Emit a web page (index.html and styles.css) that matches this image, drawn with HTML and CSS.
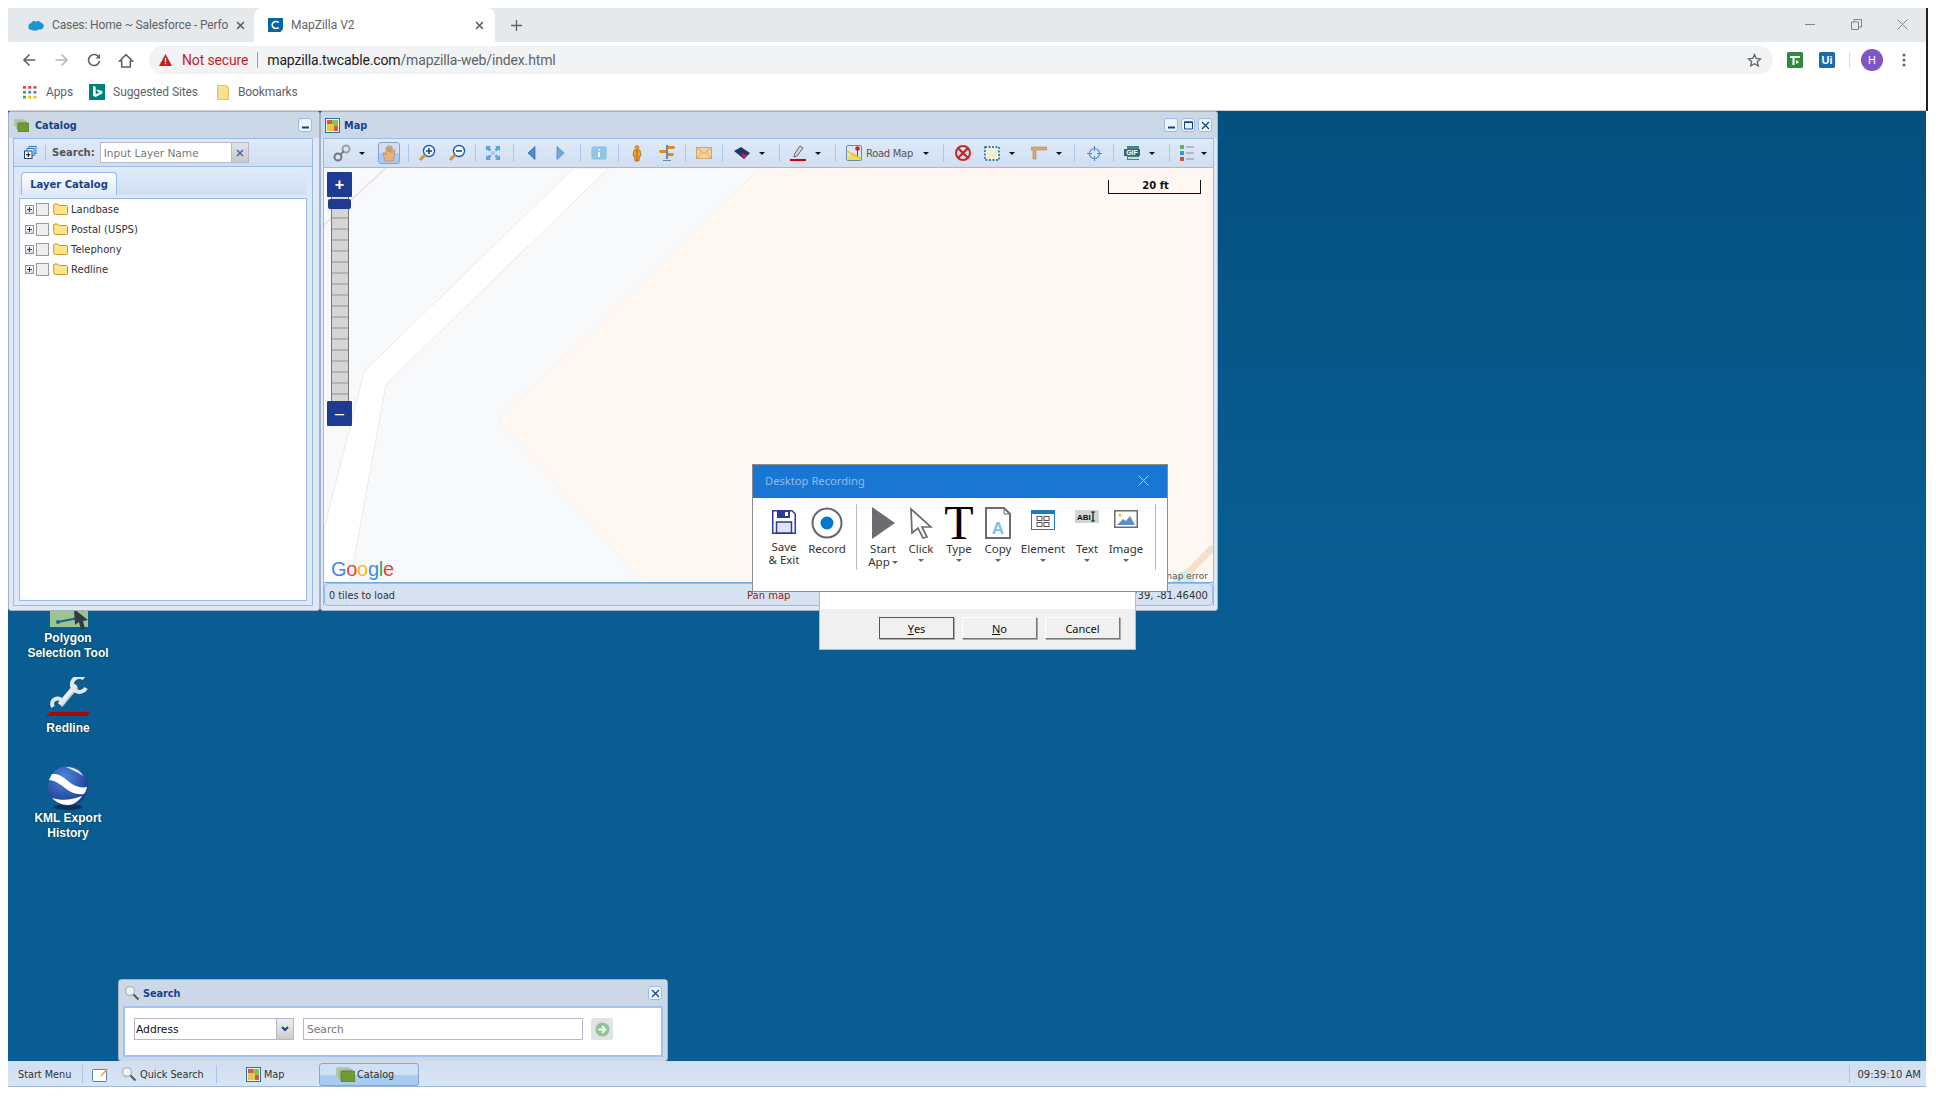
FILE: index.html
```html
<!DOCTYPE html>
<html lang="en">
<head>
<meta charset="utf-8">
<title>MapZilla V2</title>
<link rel="stylesheet" href="styles.css">
</head>
<body>
<div class="browser">
  <div class="tabstrip">
    <div class="tab">
      <svg class="fav" width="16" height="11" viewBox="0 0 13 10" preserveAspectRatio="none"><path d="M3 9C1 9 0 7.500 .5 6 0 4.500 1 3 2.500 3 3 1 5 .5 6.500 1.500 8 .5 10 1 10.500 2.500 12.500 3 13.500 5 12.500 6.500 12 8.500 10 9 9 8.500 7.500 10 5 10 3 9Z" fill="#1b96d6"/></svg>
      <span class="tab-title">Cases: Home ~ Salesforce - Perfo</span>
      <svg class="tab-x" width="9" height="9" viewBox="0 0 8 8"><path d="M1 1l6 6M7 1L1 7" stroke="#5f6368" stroke-width="1.300"/></svg>
    </div>
    <div class="tab tab-on">
      <svg class="fav" width="15" height="14" viewBox="0 0 12 14" preserveAspectRatio="none"><path d="M0 0h12v11l-2 3H0Z" fill="#07689f"/><path d="M8.500 4.500A3 3.500 0 1 0 8.500 9.500" fill="none" stroke="#fff" stroke-width="1.400"/></svg>
      <span class="tab-title">MapZilla V2</span>
      <svg class="tab-x" width="9" height="9" viewBox="0 0 8 8"><path d="M1 1l6 6M7 1L1 7" stroke="#5f6368" stroke-width="1.300"/></svg>
    </div>
    <svg class="newtab" width="11" height="11" viewBox="0 0 10 10"><path d="M5 0v10M0 5h10" stroke="#5f6368" stroke-width="1.200"/></svg>
    <div class="winctl">
      <svg width="11" height="11" viewBox="0 0 11 11"><path d="M0 5.500h10" stroke="#80868b"/></svg>
      <svg width="11" height="11" viewBox="0 0 11 11"><path d="M.5 3h7v7.500h-7zM3 3V.5h7.500V8H8" fill="none" stroke="#80868b"/></svg>
      <svg width="11" height="11" viewBox="0 0 11 11"><path d="M.5 .5l10 10M10.500 .5l-10 10" stroke="#80868b"/></svg>
    </div>
  </div>
  <div class="navbar">
    <svg class="nav nav-back" width="15" height="14" viewBox="0 0 14 14"><path d="M13 7H2M7 1.500L1.500 7 7 12.500" fill="none" stroke="#5f6368" stroke-width="1.600"/></svg>
    <svg class="nav nav-fwd" width="15" height="14" viewBox="0 0 14 14"><path d="M1 7h11M7 1.500L12.500 7 7 12.500" fill="none" stroke="#b4b7bb" stroke-width="1.600"/></svg>
    <svg class="nav nav-rel" width="14" height="14" viewBox="0 0 14 14"><path d="M12 4.500A5.500 5.500 0 1 0 12.500 8" fill="none" stroke="#5f6368" stroke-width="1.600"/><path d="M13 1v4.500H8.500Z" fill="#5f6368"/></svg>
    <svg class="nav nav-home" width="16" height="15" viewBox="0 0 14 14"><path d="M1 7.500L7 1.500l6 6H11v5.500H3V7.500Z" fill="none" stroke="#5f6368" stroke-width="1.500"/></svg>
    <div class="omnibox">
      <svg width="15" height="12" viewBox="0 0 12 11"><path d="M6 0l6 11H0Z" fill="#c5221f"/><path d="M6 3.500v4M6 8.300v1.200" stroke="#fff" stroke-width="1.200"/></svg>
      <span class="insecure">Not secure</span>
      <span class="omni-sep"></span>
      <span class="url"><b>mapzilla.twcable.com</b>/mapzilla-web/index.html</span>
      <svg class="star" width="15" height="15" viewBox="0 0 15 15"><path d="M7.500 1.500l1.800 4 4.300.4-3.300 2.900 1 4.200-3.800-2.200-3.800 2.200 1-4.200L1.400 5.900l4.300-.4Z" fill="none" stroke="#5f6368" stroke-width="1.300"/></svg>
    </div>
    <svg class="ext ext-first" width="16" height="16" viewBox="0 0 16 16"><rect width="16" height="16" rx="1.500" fill="#2e8b3c"/><path d="M3 4h10v2H7.500v7H5.500V6H3Z" fill="#fff"/><path d="M9 8v4l3-2Z" fill="#fff"/></svg>
    <svg class="ext" width="16" height="16" viewBox="0 0 16 16"><rect width="16" height="16" rx="1.500" fill="#1f68ad"/><text x="8" y="12" class="ui-text">Ui</text></svg>
    <span class="nav-sep"></span>
    <span class="avatar">H</span>
    <svg class="kebab" width="4" height="14" viewBox="0 0 4 14"><circle cx="2" cy="2" r="1.500" fill="#5f6368"/><circle cx="2" cy="7" r="1.500" fill="#5f6368"/><circle cx="2" cy="12" r="1.500" fill="#5f6368"/></svg>
  </div>
  <div class="bookmarks">
    <span class="bm bm-apps">
      <svg width="14" height="13" viewBox="0 0 12 12" preserveAspectRatio="none"><g><rect width="2.500" height="2.500" fill="#ea4335"/><rect x="4.500" width="2.500" height="2.500" fill="#ea4335"/><rect x="9" width="2.500" height="2.500" fill="#ea4335"/><rect y="4.500" width="2.500" height="2.500" fill="#34a853"/><rect x="4.500" y="4.500" width="2.500" height="2.500" fill="#4285f4"/><rect x="9" y="4.500" width="2.500" height="2.500" fill="#4285f4"/><rect y="9" width="2.500" height="2.500" fill="#34a853"/><rect x="4.500" y="9" width="2.500" height="2.500" fill="#fbbc05"/><rect x="9" y="9" width="2.500" height="2.500" fill="#fbbc05"/></g></svg>
      Apps
    </span>
    <span class="bm bm-bing">
      <svg width="16" height="16" viewBox="0 0 12 16" preserveAspectRatio="none"><rect width="12" height="16" fill="#00827a"/><path d="M3 2l2 .7v7.500l3-1.700-1.500-.7-1-2.300 4.500 1.600v2.500L5 13l-2-1.300Z" fill="#fff"/></svg>
      Suggested Sites
    </span>
    <span class="bm bm-folder">
      <svg width="12" height="15" viewBox="0 0 10 14" preserveAspectRatio="none"><path d="M.5 .5h7l2 2v11h-9Z" fill="#fbe08f" stroke="#e3c35c"/></svg>
      Bookmarks
    </span>
  </div>
</div>

<div class="desktop">
  <div class="canvas">
    <div class="dicon dicon-poly">
      <svg width="48" height="40" viewBox="0 0 48 40"><rect x="6" y="6" width="38" height="30" fill="#9cc48f"/><path d="M14 31l20-4" stroke="#1d5f9c" stroke-width="2"/><circle cx="14" cy="31" r="2" fill="#1d5f9c"/><path d="M30 18l14 11-5 1 2 8-4 1-2-8-4 3Z" fill="#333b42"/></svg>
      <span>Polygon<br>Selection Tool</span>
    </div>
    <div class="dicon dicon-red">
      <svg width="48" height="44" viewBox="0 0 48 44">
        <path d="M16 28L32 9" stroke="#c9ced1" stroke-width="6"/>
        <path d="M16 27L32 8" stroke="#eef0f1" stroke-width="3.500"/>
        <path d="M40 1.500A7.500 7.500 0 1 0 42 11" fill="none" stroke="#e3e6e8" stroke-width="4"/>
        <path d="M12 32A5.500 5.500 0 1 1 22 28" fill="none" stroke="#e3e6e8" stroke-width="4" transform="translate(-3 -2)"/>
        <path d="M6 35H46L43 39H2Z" fill="#a30a0a"/>
      </svg>
      <span>Redline</span>
    </div>
    <div class="dicon dicon-kml">
      <svg width="48" height="45" viewBox="0 0 48 45"><defs><radialGradient id="globe" cx=".4" cy=".3" r=".8"><stop offset="0" stop-color="#4f86e0"/><stop offset="1" stop-color="#13307f"/></radialGradient></defs><ellipse cx="24" cy="41" rx="14" ry="3" fill="#03304f"/><circle cx="24" cy="20" r="20" fill="url(#globe)"/><path d="M8 8c9-1 14 6 20 10 5 3 10 4 15 3-1 4-2 6-3 7-8 1-14-2-19-6C16 18 10 14 5 14Z" fill="#fff"/><path d="M22 1c6 0 14 2 17 9-6-4-11-6-17-9Z" fill="#d7e3f6"/><path d="M8 32c10 3 20 2 30-2-2 4-8 9-14 9-7 0-12-3-16-7Z" fill="#fff"/></svg>
      <span>KML Export<br>History</span>
    </div>

    <section class="win win-cat">
      <header class="wtitle">
        <svg width="15" height="13" viewBox="0 0 15 13"><rect x="0" y="0" width="11" height="8" fill="#b8c6b0"/><rect x="2" y="2" width="11" height="8" fill="#a4bd93"/><rect x="4" y="4" width="11" height="9" rx="1" fill="#6f9b32" stroke="#4c7420" stroke-width=".6"/></svg>
        <span class="wname">Catalog</span>
        <span class="wbtn wbtn-solo"><svg width="9" height="9" viewBox="0 0 9 9"><path d="M1 6.500h7" stroke="#15428b" stroke-width="2"/></svg></span>
      </header>
      <div class="wbody">
        <div class="cat-tools">
          <svg width="13" height="13" viewBox="0 0 13 13"><rect x="5" y=".5" width="7" height="7" fill="#cfe2f7" stroke="#2a7bd0"/><rect x="3" y="2.500" width="7" height="7" fill="#e3effb" stroke="#2a7bd0"/><rect x=".5" y="5" width="7.500" height="7.500" fill="#fff" stroke="#15428b"/><path d="M4.300 6.500v4.500M2 8.800h4.500" stroke="#000"/></svg>
          <span class="tsep"></span>
          <b class="search-lbl">Search:</b>
          <span class="cat-input">Input Layer Name</span>
          <span class="cat-clear"><svg width="8" height="8" viewBox="0 0 8 8"><path d="M1 1l6 6M7 1L1 7" stroke="#3f6da8" stroke-width="1.600"/></svg></span>
        </div>
        <div class="tabbar"><span class="ltab">Layer Catalog</span></div>
        <div class="tree">
          <div class="row"><i class="exp"></i><i class="chk"></i><svg class="fold" width="15" height="12" viewBox="0 0 15 12"><path d="M.5 2.500q0-1.500 1.500-1.500h3l1.500 1.500h7q1 0 1 1v7q0 1-1 1h-11q-1.500 0-1.500-1Z" fill="#fde58c" stroke="#c8962a"/></svg><span>Landbase</span></div>
          <div class="row"><i class="exp"></i><i class="chk"></i><svg class="fold" width="15" height="12" viewBox="0 0 15 12"><path d="M.5 2.500q0-1.500 1.500-1.500h3l1.500 1.500h7q1 0 1 1v7q0 1-1 1h-11q-1.500 0-1.500-1Z" fill="#fde58c" stroke="#c8962a"/></svg><span>Postal (USPS)</span></div>
          <div class="row"><i class="exp"></i><i class="chk"></i><svg class="fold" width="15" height="12" viewBox="0 0 15 12"><path d="M.5 2.500q0-1.500 1.500-1.500h3l1.500 1.500h7q1 0 1 1v7q0 1-1 1h-11q-1.500 0-1.500-1Z" fill="#fde58c" stroke="#c8962a"/></svg><span>Telephony</span></div>
          <div class="row"><i class="exp"></i><i class="chk"></i><svg class="fold" width="15" height="12" viewBox="0 0 15 12"><path d="M.5 2.500q0-1.500 1.500-1.500h3l1.500 1.500h7q1 0 1 1v7q0 1-1 1h-11q-1.500 0-1.500-1Z" fill="#fde58c" stroke="#c8962a"/></svg><span>Redline</span></div>
        </div>
      </div>
    </section>

    <section class="win win-map">
      <header class="wtitle">
        <svg width="15" height="15" viewBox="0 0 15 15"><rect x=".5" y=".5" width="14" height="14" fill="#eef3e0" stroke="#2d6fa8"/><path d="M2 2h5v4H2Z" fill="#d9534f"/><path d="M7 2h6v6H9L7 6Z" fill="#8fbf4f"/><path d="M2 6h5l2 3v4H2Z" fill="#e8c93f"/><path d="M9 8h4v5H9Z" fill="#d9534f"/></svg>
        <span class="wname">Map</span>
        <span class="wbtn-group">
          <span class="wbtn"><svg width="9" height="9" viewBox="0 0 9 9"><path d="M1 6.500h7" stroke="#15428b" stroke-width="2"/></svg></span>
          <span class="wbtn"><svg width="9" height="9" viewBox="0 0 9 9"><path d="M.5 1h8v7h-8Z" fill="none" stroke="#15428b"/><path d="M0 1.300h9" stroke="#15428b" stroke-width="1.500"/></svg></span>
          <span class="wbtn"><svg width="9" height="9" viewBox="0 0 9 9"><path d="M1 1l7 7M8 1L1 8" stroke="#15428b" stroke-width="1.300"/></svg></span>
        </span>
      </header>
      <div class="wbody wbody-map">
        <div class="toolbar">
          <span class="ti"><svg width="18" height="18" viewBox="0 0 18 18"><circle cx="5" cy="13" r="3.500" fill="none" stroke="#75797d" stroke-width="2"/><circle cx="13" cy="5" r="3.500" fill="none" stroke="#9b9fa3" stroke-width="2"/><path d="M7 11l4-4" stroke="#75797d" stroke-width="2"/></svg></span>
          <i class="ar"></i>
          <span class="ti ti-on"><svg width="15" height="17" viewBox="0 0 15 17"><path d="M3 16L1 9c-.5-1.500 1-2 2-1l1 2V3c0-1.300 1.500-1.300 1.700 0l.3 4V1.500c0-1.300 1.700-1.300 1.800 0L8 7l.5-5c.1-1.300 1.700-1.200 1.700 0L10 8l1.500-3c.6-1 1.900-.6 1.500.6L12 12l-1 4Z" fill="#e7b183" stroke="#b87f4e" stroke-width=".6"/></svg></span>
          <i class="sp p1"></i>
          <span class="ti"><svg width="18" height="18" viewBox="0 0 18 18"><circle cx="11" cy="7" r="5.500" fill="#fff" stroke="#1558c4" stroke-width="1.400"/><path d="M8 7h6M11 4v6" stroke="#15428b" stroke-width="1.600"/><path d="M7 11l-5 5" stroke="#d39a22" stroke-width="3"/></svg></span>
          <span class="ti p1"><svg width="18" height="18" viewBox="0 0 18 18"><circle cx="11" cy="7" r="5.500" fill="#fff" stroke="#1558c4" stroke-width="1.400"/><path d="M8 7h6" stroke="#15428b" stroke-width="1.600"/><path d="M7 11l-5 5" stroke="#d39a22" stroke-width="3"/></svg></span>
          <i class="sp"></i>
          <span class="ti m1"><svg width="16" height="16" viewBox="0 0 16 16"><path d="M1 1h5L4.500 2.500 6.500 4.500 4.500 6.500 2.500 4.500 1 6ZM15 1v5l-1.500-1.500-2 2-2-2 2-2L10 1ZM1 15v-5l1.500 1.500 2-2 2 2-2 2L6 15ZM15 15h-5l1.500-1.500-2-2 2-2 2 2L15 10Z" fill="#56a3de"/><rect x="6" y="6" width="4" height="4" fill="#a8cdee"/></svg></span>
          <i class="sp p2"></i>
          <span class="ti m1"><svg width="9" height="14" viewBox="0 0 9 14"><path d="M8 .5V13.500L1 7Z" fill="#4f8ad0" stroke="#2a5fa8" stroke-width=".7"/></svg></span>
          <span class="ti"><svg width="9" height="14" viewBox="0 0 9 14"><path d="M1 .5V13.500L8 7Z" fill="#78a6dc" stroke="#4c7fbf" stroke-width=".7"/></svg></span>
          <i class="sp p2"></i>
          <span class="ti"><svg width="16" height="14" viewBox="0 0 16 14"><rect x=".5" y=".5" width="15" height="13" rx="2" fill="#8cc4ea" stroke="#a8d0ec"/><path d="M7 6h2v5H7ZM7.400 3h1.800v1.600H7.400Z" fill="#fff"/></svg></span>
          <i class="sp p1"></i>
          <span class="ti"><svg width="10" height="17" viewBox="0 0 10 17"><circle cx="5" cy="2.500" r="2" fill="#f2a51c" stroke="#7c5a10" stroke-width=".5"/><path d="M2 5h6l1 6H7.500L7 16H3l-.5-5H1Z" fill="#f2a51c" stroke="#7c5a10" stroke-width=".6"/><path d="M5 5v11" stroke="#c44" stroke-width="1"/></svg></span>
          <span class="ti p1"><svg width="16" height="16" viewBox="0 0 16 16"><path d="M7 0h2v14H7Z" fill="#6b86a8"/><path d="M9 1h6l1 1.500-1 1.500H9ZM7 5H1L0 6.500 1 8h6ZM9 8h5l1 1.500-1 1.500H9Z" fill="#e08a1e"/><path d="M4 15h8v1H4Z" fill="#6b86a8"/></svg></span>
          <i class="sp"></i>
          <span class="ti"><svg width="16" height="12" viewBox="0 0 16 12"><rect x=".5" y=".5" width="15" height="11" fill="#f2d49a" stroke="#cfa869"/><path d="M.5 .5l7.500 6 7.500-6M.5 11.500L6 5.500M15.500 11.500L10 5.500" fill="none" stroke="#cfa869"/></svg></span>
          <i class="sp"></i>
          <span class="ti p1"><svg width="17" height="13" viewBox="0 0 17 13"><path d="M0 4l7-4 9 6-6 6Z" fill="#1b3a66"/><path d="M7 6l6 2-3 4Z" fill="#e0163c"/></svg></span>
          <i class="ar"></i>
          <i class="sp p1"></i>
          <span class="ti"><svg width="16" height="16" viewBox="0 0 16 16"><path d="M10 1l3 2-6 8-3 1 .5-3Z" fill="#d8d8d8" stroke="#444" stroke-width=".8"/><path d="M0 14h16v2H0Z" fill="#cc0000"/></svg></span>
          <i class="ar"></i>
          <i class="sp p1"></i>
          <span class="ti"><svg width="16" height="16" viewBox="0 0 16 16"><rect x=".5" y=".5" width="15" height="15" rx="1.500" fill="#dfe7f0" stroke="#6c8aa8"/><path d="M1 12l6-4 8 4v3H1Z" fill="#f2dc5a"/><path d="M1 6l14 8" stroke="#e8c43a" stroke-width="2"/><circle cx="11.500" cy="3.500" r="2.300" fill="#d62020"/><path d="M11.500 5v6" stroke="#555"/></svg></span>
          <span class="tb-text">Road Map</span>
          <i class="ar"></i>
          <i class="sp p1"></i>
          <span class="ti p1"><svg width="16" height="16" viewBox="0 0 16 16"><circle cx="8" cy="8" r="7" fill="none" stroke="#c62828" stroke-width="2"/><path d="M3 3l10 10M13 3L3 13" stroke="#c62828" stroke-width="2.400"/></svg></span>
          <span class="ti"><svg width="16" height="15" viewBox="0 0 16 15"><rect x="1" y="1" width="14" height="13" fill="#eff0d8" stroke="#0b5d9c" stroke-width="1.400" stroke-dasharray="2 1.500"/></svg></span>
          <i class="ar"></i>
          <span class="ti"><svg width="16" height="14" viewBox="0 0 16 14"><path d="M0 1h16v3H5v9H2V4H0Z" fill="#e0a96a" stroke="#b0763a" stroke-width=".5"/></svg></span>
          <i class="ar ar-tight"></i>
          <i class="sp"></i>
          <span class="ti p1"><svg width="15" height="15" viewBox="0 0 15 15"><circle cx="7.500" cy="7.500" r="5" fill="none" stroke="#5b86c8" stroke-width="1.100"/><path d="M7.500 0v5M7.500 10v5M0 7.500h5M10 7.500h5" stroke="#5b86c8" stroke-width="1.100"/></svg></span>
          <i class="sp p1"></i>
          <span class="ti"><svg width="16" height="14" viewBox="0 0 16 14"><rect x="3" y="0" width="12" height="14" fill="#3e8791"/><rect x="0" y="3" width="16" height="7" fill="#3a6570"/><rect x="4" y="11" width="11" height="2" fill="#bfe0e4"/><text x="8" y="9" class="gif-text">GIF</text></svg></span>
          <i class="ar"></i>
          <i class="sp p1"></i>
          <span class="ti m1"><svg width="14" height="16" viewBox="0 0 14 16"><rect width="4" height="4" fill="#55b84a"/><rect y="6" width="4" height="4" fill="#3f8fe0"/><rect y="12" width="4" height="4" fill="#d24a3a"/><path d="M6 2h8M6 8h8M6 14h8" stroke="#a8a8a8" stroke-width="1.500"/></svg></span>
          <i class="ar ar-last"></i>
        </div>
        <div class="mapview">
          <svg class="mapbg" width="890" height="415" viewBox="323 168 890 415" preserveAspectRatio="none">
            <rect x="323" y="168" width="890" height="415" fill="#f8f9fb"/>
            <path d="M385 168L323 225" stroke="#e3e4e6" stroke-width="1.500"/>
            <path d="M573 168H608L385 385 349 583H323V530L363 372Z" fill="#fff" stroke="#e8e9eb"/>
            <path d="M760 168H1213V583H642L498 420Z" fill="#fff7f2" stroke="#fdeee2"/>
            <path d="M1213 548L1186 576" stroke="#f5dfca" stroke-width="7"/>
            <path d="M1172 583l8-10 9 0 6 10Z" fill="#cdeaea"/>
          </svg>
          <div class="zoom">
            <span class="zbtn">+</span>
            <span class="zthumb"></span>
            <div class="ztrack"></div>
            <span class="zbtn zminus">–</span>
          </div>
          <div class="scale">20 ft</div>
          <div class="google"><span class="gb">G</span><span class="gr">o</span><span class="gy">o</span><span class="gb">g</span><span class="gg">l</span><span class="gr">e</span></div>
          <div class="maperr">map error</div>
        </div>
        <div class="status">
          <span>0 tiles to load</span>
          <span class="panmap">Pan map</span>
          <span class="coords">739, -81.46400</span>
        </div>
      </div>
    </section>

    <section class="confirm">
      <div class="confirm-body"></div>
      <div class="confirm-btns">
        <span class="wbutton wbutton-def"><u>Y</u>es</span>
        <span class="wbutton"><u>N</u>o</span>
        <span class="wbutton">Cancel</span>
      </div>
    </section>

    <section class="rec">
      <header class="rec-title"><span>Desktop Recording</span>
        <svg width="11" height="11" viewBox="0 0 11 11"><path d="M.5 .5l10 10M10.500 .5l-10 10" stroke="#a9cdf0"/></svg>
      </header>
      <div class="ribbon">
        <div class="rb rb-save"><svg width="24" height="24" viewBox="0 0 24 24"><path d="M.75 .75H20L23.250 4V23.250H.75Z" fill="#fff" stroke="#2d3b97" stroke-width="1.500"/><path d="M5 1h13v7H5Z" fill="#2d3b97"/><rect x="13" y="2" width="3" height="4" fill="#fff"/><rect x="4.500" y="12" width="15" height="11" fill="#dfe3f4" stroke="#2d3b97" stroke-width="1.500"/></svg><span class="rb-lab rb-lab-save">Save<br>&amp; Exit</span></div>
        <div class="rb rb-record"><svg width="32" height="32" viewBox="0 0 32 32"><circle cx="16" cy="16" r="14.500" fill="#fff" stroke="#666" stroke-width="2"/><circle cx="16" cy="16" r="6.500" fill="#0078d4"/></svg><span class="rb-lab">Record</span></div>
        <i class="rsep"></i>
        <div class="rb rb-start"><svg width="24" height="32" viewBox="0 0 24 32"><path d="M1 0L24 16 1 32Z" fill="#6a6c70"/></svg><span class="rb-lab">Start<br>App<i class="car car-in"></i></span></div>
        <div class="rb"><svg width="24" height="32" viewBox="0 0 24 32"><path d="M2 2l20 18-9 0 5 10-4 1-5-10-6 5Z" fill="#fff" stroke="#6a6c70" stroke-width="1.700"/></svg><span class="rb-lab">Click<i class="car"></i></span></div>
        <div class="rb"><span class="bigT">T</span><span class="rb-lab">Type<i class="car"></i></span></div>
        <div class="rb rb-copy"><svg width="26" height="32" viewBox="0 0 26 32"><path d="M1 1H19L25 7V31H1Z" fill="#fff" stroke="#6a6c70" stroke-width="2"/><path d="M19 1V7H25" fill="none" stroke="#6a6c70"/><text x="13" y="27" class="copy-a">A</text></svg><span class="rb-lab">Copy<i class="car"></i></span></div>
        <div class="rb rb-wide"><svg class="rb-ico3" width="24" height="20" viewBox="0 0 24 20"><rect width="24" height="20" fill="#1c7dbe"/><rect x="1" y="4" width="22" height="15" fill="#fff"/><g fill="none" stroke="#555"><rect x="6" y="6.500" width="5" height="4"/><rect x="13" y="6.500" width="5" height="4"/><rect x="6" y="12.500" width="5" height="4"/><rect x="13" y="12.500" width="5" height="4"/></g></svg><span class="rb-lab">Element<i class="car"></i></span></div>
        <div class="rb"><svg class="rb-ico3" width="24" height="14" viewBox="0 0 24 14"><rect width="24" height="13" fill="#d4d4d4"/><text x="2" y="10" class="abi-text">ABI</text><path d="M16 2h4M18 2v9M16 11h4" stroke="#111" stroke-width="1.200"/></svg><span class="rb-lab">Text<i class="car"></i></span></div>
        <div class="rb rb-img"><svg class="rb-ico3" width="24" height="18" viewBox="0 0 24 18"><rect x=".75" y=".75" width="22.500" height="16.500" fill="#fff" stroke="#6a6c70" stroke-width="1.500"/><path d="M3 15l6-6 3 2 4-5 5 9Z" fill="#5b8ccc"/><circle cx="6" cy="5" r="1.500" fill="#f0c040"/></svg><span class="rb-lab">Image<i class="car"></i></span></div>
        <i class="rsep rsep-end"></i>
      </div>
    </section>

    <section class="win win-search">
      <header class="wtitle">
        <svg width="16" height="16" viewBox="0 0 16 16"><circle cx="6" cy="6" r="4.500" fill="#eef0f2" stroke="#b5b8bb" stroke-width="1.400"/><path d="M9.500 9.500l5 5" stroke="#555" stroke-width="2"/></svg>
        <span class="wname">Search</span>
        <span class="wbtn wbtn-solo"><svg width="9" height="9" viewBox="0 0 9 9"><path d="M1 1l7 7M8 1L1 8" stroke="#15428b" stroke-width="1.300"/></svg></span>
      </header>
      <div class="search-body">
        <div class="combo"><span>Address</span><i class="combo-btn"><svg width="8" height="6" viewBox="0 0 8 6"><path d="M1 1l3 3 3-3" fill="none" stroke="#15428b" stroke-width="2"/></svg></i></div>
        <div class="search-in">Search</div>
        <span class="go"><svg width="15" height="15" viewBox="0 0 15 15"><circle cx="7.500" cy="7.500" r="7" fill="#8cc494"/><path d="M3.500 7.500h6M7 4l3.500 3.500L7 11" fill="none" stroke="#fff" stroke-width="1.800"/></svg></span>
      </div>
    </section>
  </div>

  <footer class="taskbar">
    <span class="start">Start Menu</span>
    <i class="sp"></i>
    <svg class="tk-note" width="17" height="16" viewBox="0 0 17 16"><rect x=".5" y="3.500" width="14" height="12" rx="1" fill="#fff" stroke="#5a7fae"/><path d="M9 9l6-7 1 1-6 7-2 .5Z" fill="#e9a23b"/></svg>
    <svg class="tk-search" width="16" height="16" viewBox="0 0 16 16"><circle cx="6" cy="6" r="4.500" fill="#eef0f2" stroke="#b5b8bb" stroke-width="1.400"/><path d="M9.500 9.500l5 5" stroke="#555" stroke-width="2"/></svg>
    <span class="tk-q">Quick Search</span>
    <i class="sp tk-sep2"></i>
    <span class="tk-map"><svg width="15" height="15" viewBox="0 0 15 15"><rect x=".5" y=".5" width="14" height="14" fill="#eef3e0" stroke="#2d6fa8"/><path d="M2 2h5v4H2Z" fill="#d9534f"/><path d="M7 2h6v6H9L7 6Z" fill="#8fbf4f"/><path d="M2 6h5l2 3v4H2Z" fill="#e8c93f"/><path d="M9 8h4v5H9Z" fill="#d9534f"/></svg>Map</span>
    <span class="tk-cat"><svg width="19" height="15" viewBox="0 0 19 15"><rect x="0" y="0" width="14" height="10" fill="#b8c6b0"/><rect x="2.500" y="2" width="14" height="10" fill="#a4bd93"/><rect x="5" y="4" width="14" height="11" rx="1" fill="#6f9b32" stroke="#4c7420" stroke-width=".6"/></svg>Catalog</span>
    <i class="sp tk-sep3"></i>
    <span class="clock">09:39:10 AM</span>
  </footer>
</div>
</body>
</html>
```
FILE: styles.css
```css
* { box-sizing: border-box; }
html, body { margin: 0; height: 100%; }
body {
  width: 1936px; height: 1096px; overflow: hidden; background: #fff;
  padding: 8px 8px 9px 8px; display: flex; flex-direction: column;
  font-family: "DejaVu Sans", sans-serif; font-size: 10px; color: #333;
}
svg { display: block; flex: none; }
i { display: block; font-style: normal; flex: none; }

/* browser */
.browser { height: 103px; flex: none; border-right: 2px solid #222; font-family: Roboto, sans-serif; }
.tabstrip { height: 34px; background: #e6e9ec; display: flex; align-items: stretch; }
.tab { width: 246px; flex: none; display: flex; align-items: center; padding-left: 20px; color: #5f6368; font-size: 12px; }
.tab-on { width: 241px; background: #fff; border-radius: 8px 8px 0 0; padding-left: 14px; }
.tab-title { margin-left: 8px; white-space: nowrap; overflow: hidden; width: 176px; letter-spacing: -.13px; }
.tab-on .tab-title { margin-left: 8px; width: 184px; letter-spacing: 0; }
.tab-x { margin-left: 8px; }
.tab-on .tab-x { margin-left: 0; }
.newtab { margin: 12px 0 0 16px; }
.winctl { margin-left: auto; display: flex; gap: 35px; padding: 11px 18px 0 0; }
.navbar { height: 36px; background: #fff; display: flex; align-items: center; }
.nav-back { margin-left: 14px; }
.nav-fwd { margin-left: 17px; }
.nav-rel { margin-left: 18px; }
.nav-home { margin-left: 17px; }
.omnibox {
  margin-left: 15px; width: 1624px; flex: none; height: 28px; border-radius: 14px; background: #f1f3f4;
  display: flex; align-items: center; padding-left: 9px; font-size: 14px; letter-spacing: -.15px;
}
.insecure { color: #c5221f; margin-left: 9px; }
.omni-sep { width: 1px; height: 16px; background: #9aa0a6; margin: 0 9px; }
.url { color: #5f6368; }
.url b { font-weight: 400; color: #202124; }
.star { margin-left: auto; margin-right: 11px; }
.ext { margin-left: 16px; }
.ext-first { margin-left: 14px; }
.ui-text { font: 700 11px "Liberation Sans", sans-serif; fill: #fff; text-anchor: middle; }
.nav-sep { width: 1px; height: 16px; background: #dadce0; margin-left: 14px; }
.avatar { width: 22px; height: 22px; border-radius: 50%; background: #7e57c2; color: #fff; font-size: 11px; display: flex; align-items: center; justify-content: center; margin-left: 11px; }
.kebab { margin-left: 19px; }
.bookmarks { height: 33px; background: #fff; border-bottom: 1px solid #cfcfcf; display: flex; align-items: center; font-size: 12px; color: #5f6368; padding-bottom: 4px; letter-spacing: -.1px; }
.bm { display: flex; align-items: center; }
.bm-apps { margin-left: 15px; gap: 9px; }
.bm-bing { margin-left: 16px; gap: 8px; }
.bm-folder { margin-left: 19px; gap: 9px; }

/* desktop */
.desktop { flex: 1; min-height: 0; width: 1918px; display: flex; flex-direction: column; background: linear-gradient(#04507f, #095d92 45%, #095d92); }
.canvas { flex: 1; position: relative; overflow: hidden; }
.dicon { position: absolute; left: 12px; width: 96px; display: flex; flex-direction: column; align-items: center; color: #fff; font: 700 12px/15px "Liberation Sans", sans-serif; text-align: center; text-shadow: 0 0 2px #033; }
.dicon-poly { top: 480px; }
.dicon-red { top: 566px; }
.dicon-kml { top: 655px; }

.win { position: absolute; background: #dfe8f6; border: 1px solid #a3b3c7; border-radius: 3px; padding: 0 4px 4px; display: flex; flex-direction: column; }
.win-cat { left: 0; top: 0; width: 312px; height: 500px; padding-right: 6px; }
.win-map { left: 312px; top: 0; width: 898px; height: 500px; padding: 0 3px 4px 2px; }
.win-search { left: 110px; top: 868px; width: 550px; height: 83px; background: #ccd8e6; border-radius: 4px; }
.wtitle { height: 26px; margin: 0 -4px; padding: 0 5px; background: #ccd8e6; display: flex; align-items: center; flex: none; }
.wname { font-weight: 700; color: #15428b; font-size: 9.700px; margin-left: 5px; }
.win-cat .wtitle { margin-right: -6px; padding-right: 7px; }
.win-cat .wname { margin-left: 6px; }
.win-map .wtitle { margin: 0 -3px 0 -2px; padding-left: 4px; }
.win-map .wname { margin-left: 4px; }
.win-search .wname { margin-left: 3px; }
.wbtn-group { margin-left: auto; display: flex; gap: 3px; }
.wbtn { width: 14px; height: 14px; border: 1px solid #99bbe8; border-radius: 3px; background: #eef4fc; display: flex; align-items: center; justify-content: center; }
.wbtn-solo { margin-left: auto; }
.wbody { flex: 1; min-height: 0; border: 1px solid #99bbe8; display: flex; flex-direction: column; background: #dfe8f6; }
.cat-tools { height: 28px; flex: none; border-bottom: 1px solid #99bbe8; background: linear-gradient(#dfeafa, #d0def0); display: flex; align-items: center; padding-left: 10px; }
.tsep { width: 1px; height: 16px; background: #a9c6ee; margin: 0 6px 0 8px; }
.search-lbl { color: #555; font-size: 10px; }
.cat-input { margin-left: 5px; width: 132px; height: 21px; background: #fff; border: 1px solid #b5b8c8; color: #777; display: flex; align-items: center; padding-left: 3px; font-size: 10.600px; }
.cat-clear { width: 17px; height: 21px; background: linear-gradient(#e3e3e5, #c8c9cc); border: 1px solid #b5b8c8; border-left: 0; display: flex; align-items: center; justify-content: center; }
.tabbar { height: 30px; flex: none; background: linear-gradient(#e2ecfa, #cedff5); padding: 5px 0 0 2px; border-bottom: 2px solid #dfe8f6; margin: 0 5px; display: flex; }
.ltab { width: 96px; height: 23px; background: linear-gradient(#fbfdff, #dce9f9); border: 1px solid #99bbe8; border-bottom: 0; border-radius: 4px 4px 0 0; color: #15428b; font-weight: 700; display: flex; align-items: center; justify-content: center; }
.tree { flex: 1; margin: 1px 5px 4px; background: #fff; border: 1px solid #99bbe8; }
.row { height: 20px; display: flex; align-items: center; padding-left: 5px; color: #333; }
.exp { width: 9px; height: 9px; border: 1px solid #7e99b8; background: linear-gradient(#fff, #cfdcec) padding-box; position: relative; }
.exp::before { content: ""; position: absolute; left: 1px; top: 3px; width: 5px; height: 1px; background: #15428b; }
.exp::after { content: ""; position: absolute; left: 3px; top: 1px; width: 1px; height: 5px; background: #15428b; }
.chk { width: 13px; height: 13px; margin-left: 2px; border: 1px solid #999; background: #eee; }
.fold { margin-left: 4px; margin-right: 3px; }

.toolbar { height: 29px; flex: none; border-bottom: 1px solid #99bbe8; background: linear-gradient(#dfeafa, #d0def0); display: flex; align-items: center; gap: 7px; padding-left: 7px; }
.ti { width: 22px; height: 22px; display: flex; align-items: center; justify-content: center; flex: none; }
.ti-on { border: 1px solid #86a4cc; border-radius: 3px; background: linear-gradient(#cfe0f5 50%, #a6ccf3 50%); }
.ar { width: 0; height: 0; border: 3px solid transparent; border-top-color: #111; border-bottom: 0; margin: 0 6px 0 -1px; }
.ar-tight { margin-right: 5px; }
.ar-last { margin-left: -4px; margin-right: 0; }
.sp { width: 1px; height: 18px; background: #a9c6ee; flex: none; }
.p1 { margin-left: 1px; }
.p2 { margin-left: 2px; }
.m1 { margin-left: -1px; }
.tb-text { margin-left: -6px; margin-right: 3px; font-size: 10px; color: #555; width: 48px; white-space: nowrap; letter-spacing: -.3px; }
.gif-text { font: 700 7px "Liberation Sans", sans-serif; fill: #fff; text-anchor: middle; }

.mapview { flex: 1; min-height: 0; position: relative; overflow: hidden; border-bottom: 1px solid #6db0e8; }
.mapbg { position: absolute; inset: 0; width: 100%; height: 100%; }
.zoom { position: absolute; left: 3px; top: 4px; width: 25px; display: flex; flex-direction: column; align-items: center; }
.zbtn { width: 25px; height: 25px; flex: none; background: #1f3a93; color: #fff; border-radius: 1px; display: flex; align-items: center; justify-content: center; font: 700 16px "Liberation Sans", sans-serif; }
.zminus { font-weight: 400; }
.zthumb { position: absolute; top: 27px; width: 23px; height: 10px; background: #1f3a93; border-radius: 2px; }
.ztrack { width: 18px; height: 204px; border: 1px solid #777; border-width: 0 1px; background: repeating-linear-gradient(#d5d6d4 0 9px, #b3b4b1 9px 11px); }
.scale { position: absolute; right: 12px; top: 12px; width: 93px; height: 14px; border: 1px solid #111; border-top: 0; color: #111; font-weight: 700; font-size: 10px; line-height: 12px; text-align: center; padding-left: 2px; }
.google { position: absolute; left: 7px; bottom: 0; font: 400 20px/26px "Liberation Sans", sans-serif; letter-spacing: -.3px; }
.gb { color: #4285f4; } .gr { color: #ea4335; } .gy { color: #fbbc05; } .gg { color: #34a853; }
.maperr { position: absolute; right: 5px; bottom: 1px; color: #555; font-size: 9px; }
.status { height: 23px; flex: none; background: #d6e2f2; border: 1px solid #99bbe8; border-radius: 4px; display: flex; align-items: center; padding: 1px 4px 0; position: relative; color: #333; font-size: 9.700px; }
.panmap { position: absolute; left: 422px; color: #8a1c1c; font-size: 10px; }
.coords { margin-left: auto; font-size: 10px; }
.wbody-map { border-bottom: 0; }

/* dialogs */
.confirm { position: absolute; left: 811px; top: 480px; width: 317px; height: 59px; background: #f0f0f0; border: 1px solid #bbb; display: flex; flex-direction: column; font: 11px "Noto Sans", sans-serif; color: #111; }
.confirm-body { height: 17px; background: #fff; flex: none; }
.confirm-btns { display: flex; gap: 8px; padding: 8px 0 0 59px; }
.wbutton { width: 75px; height: 22px; flex: none; background: #f0f0f0; border: 1px solid; border-color: #fff #777 #777 #fff; box-shadow: 1px 1px 0 #aaa; display: flex; align-items: center; justify-content: center; }
.wbutton-def { outline: 1px solid #555; outline-offset: -1px; }
.rec { position: absolute; left: 744px; top: 353px; width: 416px; height: 128px; background: #fff; border: 1px solid #8c8c8c; display: flex; flex-direction: column; font: 11.500px/13px "Noto Sans", sans-serif; color: #333; }
.rec-title { height: 33px; flex: none; background: #1976d2; color: #8ebcec; font-size: 11.200px; display: flex; align-items: center; justify-content: space-between; padding: 0 18px 2px 12px; }
.ribbon { display: flex; padding: 9px 0 0 11px; align-items: flex-start; }
.rb { width: 38px; height: 64px; flex: none; display: flex; flex-direction: column; align-items: center; position: relative; }
.rb-save { width: 40px; padding-top: 3px; }
.rb-record { width: 46px; }
.rb-start { margin-left: 7px; }
.rb-copy { width: 40px; }
.rb-wide { width: 50px; }
.rb-img { width: 40px; }
.rb-ico3 { margin-top: 3px; }
.rb-lab { position: absolute; top: 35px; left: -8px; right: -8px; text-align: center; white-space: nowrap; }
.rb-lab-save { top: 33px; }
.car { width: 0; height: 0; border: 3.500px solid transparent; border-top-color: #666; border-bottom: 0; margin: 4px auto 0; }
.car-in { display: inline-block; margin: 0 0 2px 2px; }
.bigT { font: 400 48px/32px "Liberation Serif", serif; color: #000; height: 32px; }
.copy-a { font: 700 17px "Liberation Sans", sans-serif; fill: #7cc0ea; text-anchor: middle; }
.abi-text { font: 700 8px "Liberation Sans", sans-serif; fill: #111; }
.rsep { width: 1px; height: 66px; background: #bbb; margin: -3px 0 0 6px; flex: none; }
.rsep-end { margin-left: 9px; }

.search-body { flex: 1; background: #fff; border: 2px solid #a3c3ee; display: flex; align-items: flex-start; padding: 10px 0 0 9px; font-size: 10.700px; }
.combo { width: 160px; height: 22px; flex: none; border: 1px solid #b5b8c8; display: flex; align-items: center; justify-content: space-between; padding-left: 1px; color: #111; }
.combo-btn { width: 17px; height: 20px; background: linear-gradient(#eee, #ccc); border-left: 1px solid #b5b8c8; display: flex; align-items: center; justify-content: center; }
.search-in { width: 280px; height: 22px; flex: none; margin-left: 9px; border: 1px solid #b5b8c8; color: #777; display: flex; align-items: center; padding-left: 3px; }
.go { width: 22px; height: 22px; flex: none; margin-left: 8px; border-radius: 2px; background: #e2e3e4; display: flex; align-items: center; justify-content: center; }

.taskbar { height: 26px; flex: none; background: linear-gradient(#d0deef, #d8e5f5); border-bottom: 1px solid #9fb8d9; display: flex; align-items: center; font-size: 9.700px; color: #333; padding: 1px 0 0 10px; }
.start { width: 64px; white-space: nowrap; }
.tk-note { margin-left: 9px; }
.tk-search { margin-left: 12px; }
.tk-q { margin-left: 3px; width: 76px; white-space: nowrap; }
.tk-map { margin-left: 29px; display: flex; align-items: center; gap: 3px; width: 73px; }
.tk-cat { width: 100px; height: 23px; border: 1px solid #86a4cc; border-radius: 3px; background: linear-gradient(#cfe0f5 50%, #a6ccf3 50%); display: flex; align-items: center; gap: 2px; padding-left: 16px; }
.tk-sep3 { margin-left: auto; }
.clock { margin: 0 5px 0 7px; white-space: nowrap; font-size: 10px; }
```
